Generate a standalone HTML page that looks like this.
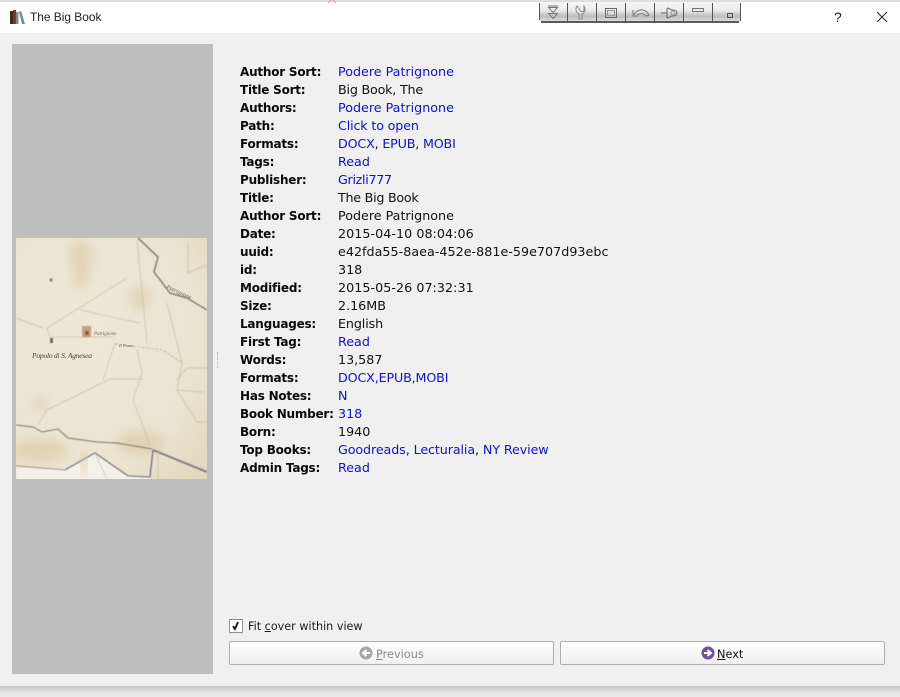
<!DOCTYPE html>
<html><head><meta charset="utf-8"><style>
html,body{margin:0;padding:0}
body{width:900px;height:697px;position:relative;overflow:hidden;background:#dcdcdc;font-family:"DejaVu Sans","Liberation Sans",sans-serif;font-size:13px;color:#111}
.a{position:absolute}
.r{position:absolute;left:0;white-space:nowrap;line-height:18px;height:18px;margin-top:1px}
.k{position:absolute;left:240px;font-weight:bold;font-size:12px;letter-spacing:-.22px;color:#0a0a0a}
.v{position:absolute;left:338px;font-size:12.7px}
.l{color:#1111c8}
.sep{position:absolute;top:7px;width:1px;height:14px;background:#555}
.btn{position:absolute;top:641px;height:22px;border:1px solid #adadad;border-radius:2px;background:linear-gradient(#fdfdfd,#f0f0f0)}
</style></head><body>
<div class="a" style="left:0;top:0;width:900px;height:2px;background:#dedede"></div>
<div class="a" style="left:0;top:2px;width:900px;height:31px;background:#fff"></div>
<div class="a" style="left:0;top:33px;width:900px;height:653px;background:#f0f0f0"></div>
<div class="a" style="left:0;top:686px;width:900px;height:11px;background:linear-gradient(#c4c4c4,#e6e6e6 60%,#e9e9e9)"></div>

<svg class="a" style="left:9px;top:9px" width="17" height="16" viewBox="0 0 17 16">
<rect x="1" y="2" width="3" height="13" fill="#3b2a25"/><rect x="4" y="1" width="3" height="14" fill="#6b3f33"/><rect x="7" y="3" width="2.5" height="12" fill="#8a8578"/><path d="M10 3l2-1 4 13h-3z" fill="#6c87b8"/>
</svg>
<div class="a" style="left:30px;top:10px;font-family:'Liberation Sans',sans-serif;font-size:11.9px;line-height:15px;color:#222">The Big Book</div>

<svg class="a" style="left:326px;top:0" width="16" height="3"><path d="M2 3l3-3h2l3 3" stroke="#d9a0b0" fill="none"/></svg>

<!-- floating toolbar -->
<div class="a" style="left:540px;top:2px;width:200px;height:19px;background:linear-gradient(#f6f6f6,#ebebeb 45%,#bdbdbd 75%,#dcdcdc)"></div>
<div class="a" style="left:541px;top:21px;width:198px;height:2px;background:#5a5a5a"></div>
<div class="sep" style="left:539px;top:3px;height:17px"></div>
<div class="sep" style="left:567px;top:3px;height:19px"></div>
<div class="sep" style="left:596px;top:3px;height:19px"></div>
<div class="sep" style="left:625px;top:3px;height:19px"></div>
<div class="sep" style="left:654px;top:3px;height:19px"></div>
<div class="sep" style="left:683px;top:3px;height:19px"></div>
<div class="sep" style="left:712px;top:3px;height:19px"></div>
<div class="sep" style="left:740px;top:3px;height:18px"></div>
<svg class="a" style="left:540px;top:2px" width="200" height="20" fill="none" stroke="#777" stroke-width="1">
<path d="M8.5 5.5h9l-4.5 5zM8.5 11.5h9l-4.5 5zM8 4h10"/>
<path d="M37 4c-2 3-1 7 2 8v5h3v-5c3-1 4-5 2-8v4c0 2-4 2-4 0z" stroke="#8a8a8a"/>
<rect x="65.5" y="6.5" width="11" height="9" stroke="#666"/><rect x="67.5" y="8.5" width="7" height="5" stroke="#999"/>
<path d="M93 8v6h5M94 13c2-5 8-7 13-3l2 3-3 1c-3-3-6-3-9-1" stroke="#777"/>
<path d="M121 11h6M127 6v10M127 6c3 0 3 2 5 2 4 0 5 1 5 3s-1 3-5 3c-2 0-2 2-5 2" stroke="#666"/><circle cx="133" cy="11" r="2" stroke="#999"/>
<rect x="152.5" y="6.5" width="11" height="3" stroke="#777"/>
<rect x="187.5" y="11.5" width="5" height="4" stroke="#555"/>
</svg>

<div class="a" style="left:834px;top:9px;font-family:'Liberation Sans',sans-serif;font-size:14px;line-height:16px;color:#222">?</div>
<svg class="a" style="left:876px;top:11px" width="12" height="12"><path d="M1 1l10 10M11 1L1 11" stroke="#222" stroke-width="1" fill="none"/></svg>

<!-- cover panel -->
<div class="a" style="left:12px;top:44px;width:201px;height:630px;background:#bebebe"></div>
<svg class="a" style="left:16px;top:238px" width="191" height="241" viewBox="0 0 191 241">
<defs><radialGradient id="g" cx="40%" cy="40%" r="80%"><stop offset="0" stop-color="#eee8d8"/><stop offset=".7" stop-color="#ebe3cf"/><stop offset="1" stop-color="#e3d8bd"/></radialGradient>
<filter id="b"><feGaussianBlur stdDeviation="5"/></filter><filter id="s"><feGaussianBlur stdDeviation=".45"/></filter></defs>
<rect width="191" height="241" fill="url(#g)"/>
<g filter="url(#b)" fill="#d6bf95" opacity=".45">
<ellipse cx="65" cy="20" rx="11" ry="18"/><ellipse cx="25" cy="212" rx="26" ry="11"/><ellipse cx="125" cy="205" rx="24" ry="12"/><ellipse cx="25" cy="165" rx="6" ry="6"/><ellipse cx="124" cy="60" rx="10" ry="12"/><ellipse cx="65" cy="40" rx="8" ry="10"/>
</g>
<g fill="none" filter="url(#s)">
<path d="M122 0l20 19-4 15 16 21 17 5 20 12" stroke="#77705f" stroke-width="1.3"/>
<path d="M111 40L31 90l3 9 63 0M64 72l60 13M121 2l10 103M0 80l27 10M99 105L87 142M94 141h33M121 112l5 23-9 27 17 45M94 141L31 172l-9 15M151 65l15 60-5 27 20 32h10M161 152l26 2M161 142l10-12h20M172 5v30l19-8" stroke="#c9bc9f" stroke-width=".7"/>
<path d="M99 106l48 6 19 13" stroke="#b8aa8c" stroke-width=".7" stroke-dasharray="3 1.5"/>
<path d="M0 187l17 2 9 5 16-3 10 9 29 4 20 1 35 6" stroke="#7c7668" stroke-width="1"/>
<path d="M0 229l49 3 30-17 20 14 13 9 22 1v3H0z" fill="#f4f1e8"/>
<path d="M137 212l54 22" stroke="#7b7a80" stroke-width="1.8"/>
<path d="M49 232l30-17 20 14 13 9 22 1 3-27" stroke="#5b5a72" stroke-width="1.1"/>
<path d="M0 228l49 4" stroke="#77757c" stroke-width=".8"/>
<path d="M142 214v27M79 215l12 26" stroke="#c9bc9f" stroke-width=".7"/>
</g>
<rect x="65" y="214" width="6" height="22" fill="#dbc493" filter="url(#b)" opacity=".7"/>
<rect x="66" y="88" width="9" height="11" fill="#c89a80" filter="url(#s)"/><circle cx="71" cy="95" r="2" fill="#94503c" filter="url(#s)"/>
<rect x="34" y="100" width="3" height="5" fill="#7a6a48" filter="url(#s)"/>
<circle cx="35" cy="42" r="1.6" fill="#8a8068" filter="url(#s)"/>
<text x="16" y="120" font-family="Liberation Serif,serif" font-size="7.5" font-style="italic" fill="#4a3a2c" textLength="60">Popolo di S. Agnesea</text>
<text x="78" y="97" font-family="Liberation Serif,serif" font-size="5" font-style="italic" fill="#7a6a50">Patrignone</text>
<text x="150" y="50" font-family="Liberation Serif,serif" font-size="6" font-style="italic" fill="#6a6250" transform="rotate(25 150 50)">Patrignone</text>
<text x="103" y="109" font-family="Liberation Serif,serif" font-size="4.5" font-style="italic" fill="#6a6250">Il Pozzo</text>
</svg>

<!-- splitter -->
<div class="a" style="left:217px;top:352px;width:1px;height:16px;border-left:1px dotted #b5b5b5"></div>

<!-- metadata -->
<div class="r" style="top:62px"><span class="k">Author Sort:</span><span class="v l">Podere Patrignone</span></div>
<div class="r" style="top:80px"><span class="k">Title Sort:</span><span class="v" style="letter-spacing:-.2px">Big Book, The</span></div>
<div class="r" style="top:98px"><span class="k">Authors:</span><span class="v l">Podere Patrignone</span></div>
<div class="r" style="top:116px"><span class="k">Path:</span><span class="v l" style="letter-spacing:-.15px">Click to open</span></div>
<div class="r" style="top:134px"><span class="k">Formats:</span><span class="v" style="letter-spacing:-.18px"><span class="l">DOCX</span>, <span class="l">EPUB</span>, <span class="l">MOBI</span></span></div>
<div class="r" style="top:152px"><span class="k">Tags:</span><span class="v l">Read</span></div>
<div class="r" style="top:170px"><span class="k">Publisher:</span><span class="v l" style="letter-spacing:-.3px">Grizli777</span></div>
<div class="r" style="top:188px"><span class="k">Title:</span><span class="v" style="letter-spacing:-.25px">The Big Book</span></div>
<div class="r" style="top:206px"><span class="k">Author Sort:</span><span class="v">Podere Patrignone</span></div>
<div class="r" style="top:224px"><span class="k">Date:</span><span class="v" style="letter-spacing:.05px">2015-04-10 08:04:06</span></div>
<div class="r" style="top:242px"><span class="k">uuid:</span><span class="v" style="letter-spacing:.03px">e42fda55-8aea-452e-881e-59e707d93ebc</span></div>
<div class="r" style="top:260px"><span class="k">id:</span><span class="v">318</span></div>
<div class="r" style="top:278px"><span class="k">Modified:</span><span class="v" style="letter-spacing:.05px">2015-05-26 07:32:31</span></div>
<div class="r" style="top:296px"><span class="k">Size:</span><span class="v">2.16MB</span></div>
<div class="r" style="top:314px"><span class="k">Languages:</span><span class="v" style="letter-spacing:-.1px">English</span></div>
<div class="r" style="top:332px"><span class="k">First Tag:</span><span class="v l">Read</span></div>
<div class="r" style="top:350px"><span class="k">Words:</span><span class="v">13,587</span></div>
<div class="r" style="top:368px"><span class="k">Formats:</span><span class="v l" style="letter-spacing:-.15px">DOCX,EPUB,MOBI</span></div>
<div class="r" style="top:386px"><span class="k">Has Notes:</span><span class="v l">N</span></div>
<div class="r" style="top:404px"><span class="k">Book Number:</span><span class="v l">318</span></div>
<div class="r" style="top:422px"><span class="k">Born:</span><span class="v">1940</span></div>
<div class="r" style="top:440px"><span class="k">Top Books:</span><span class="v" style="letter-spacing:-.1px"><span class="l">Goodreads</span>, <span class="l">Lecturalia</span>, <span class="l">NY Review</span></span></div>
<div class="r" style="top:458px"><span class="k">Admin Tags:</span><span class="v l">Read</span></div>

<!-- checkbox -->
<div class="a" style="left:229px;top:619px;width:12px;height:12px;border:1px solid #8f8f8f;background:#fff"></div>
<svg class="a" style="left:231px;top:621px" width="10" height="10"><path d="M2 5l2 3 3-7" stroke="#111" stroke-width="1.8" fill="none"/></svg>
<div class="a" style="left:248px;top:619px;font-size:11.2px;line-height:16px;white-space:nowrap;color:#1a1a1a">Fit <u>c</u>over within view</div>

<!-- buttons -->
<div class="btn" style="left:229px;width:323px"></div>
<svg class="a" style="left:359px;top:646px" width="14" height="14"><circle cx="7" cy="7" r="6.5" fill="#a6a6a6"/><path d="M11 7H5M7.5 4L4 7l3.5 3" stroke="#fff" stroke-width="2" fill="none"/></svg>
<div class="a" style="left:376px;top:647px;font-size:11.3px;line-height:16px;color:#8c8c8c"><u>P</u>revious</div>
<div class="btn" style="left:560px;width:323px"></div>
<svg class="a" style="left:701px;top:646px" width="14" height="14"><circle cx="7" cy="7" r="6.5" fill="#6f4fa8"/><path d="M3 7h6M6.5 4L10 7l-3.5 3" stroke="#fff" stroke-width="2" fill="none"/></svg>
<div class="a" style="left:717px;top:647px;font-size:11.3px;line-height:16px;color:#111"><u>N</u>ext</div>
</body></html>
